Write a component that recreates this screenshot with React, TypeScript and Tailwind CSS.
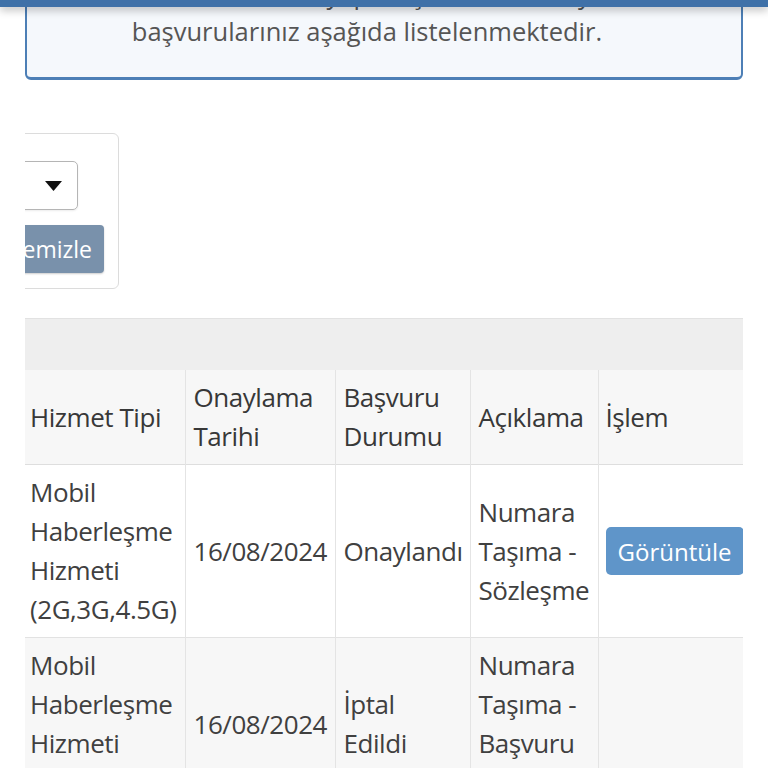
import React from 'react';

type Row = {
  hizmet: string[];
  tarih: string;
  durum: string[];
  aciklama: string[];
  islem: boolean;
};

const rows: Row[] = [
  {
    hizmet: ['Mobil', 'Haberleşme', 'Hizmeti', '(2G,3G,4.5G)'],
    tarih: '16/08/2024',
    durum: ['Onaylandı'],
    aciklama: ['Numara', 'Taşıma -', 'Sözleşme'],
    islem: true,
  },
  {
    hizmet: ['Mobil', 'Haberleşme', 'Hizmeti', '(2G,3G,4.5G)'],
    tarih: '16/08/2024',
    durum: ['İptal', 'Edildi'],
    aciklama: ['Numara', 'Taşıma -', 'Başvuru', 'İptali'],
    islem: false,
  },
];

function Lines({ items }: { items: string[] }) {
  return (
    <>
      {items.map((t, i) => (
        <div key={i}>{t}</div>
      ))}
    </>
  );
}

export default function App() {
  return (
    <div
      className="relative w-[768px] h-[768px] overflow-hidden bg-white text-[#444]"
      style={{ fontFamily: '"Open Sans", "Noto Sans", sans-serif' }}
    >
      {/* top bar */}
      <div className="absolute top-0 left-0 right-0 z-10 h-[7px] bg-[#3f71a8] shadow-[0_3px_8px_rgba(0,0,0,0.28)]" />

      <div className="px-[25px]">
        <div className="-mt-[41px] rounded-md border-2 border-b-[3px] border-[#4d7fb6] bg-[#f5f8fc] pt-[15px] pb-[27px] pr-[34px] text-center text-[25.5px] leading-[37px] text-[#555]">
          <div>Kimlik numaranız ile yapılmış olan son bir yıla ait</div>
          <div>başvurularınız aşağıda listelenmektedir.</div>
        </div>

        {/* filter card, scrolled horizontally */}
        <div className="mt-[53px] overflow-hidden">
          <div className="-ml-[200px] w-[294px] rounded-md border border-[#dcdcdc] pt-[27px] pb-[15px] flex flex-col items-end gap-[15px]">
            <div className="mr-[40px] w-[230px] h-[49px] rounded-[5px] border border-[#b5b5b5] shadow-[0_1px_2px_rgba(0,0,0,0.08)] flex items-center justify-end pr-[15px]">
              <svg width="17" height="10" viewBox="0 0 17 10">
                <path d="M0 0 H17 L8.5 10 Z" fill="#111" />
              </svg>
            </div>
            <button className="mr-[14px] h-[48px] w-[160px] rounded-[4px] bg-[#7991ab] pr-[12px] text-right text-[23px] text-white shadow-[0_1px_2px_rgba(0,0,0,0.2)]">
              Temizle
            </button>
          </div>
        </div>

        {/* results */}
        <div className="mt-[29px] overflow-hidden">
          <div className="h-[52px] border-t border-[#e2e2e2] bg-[#eeeeee] shadow-[0_1px_2px_rgba(0,0,0,0.12)]" />
          <table className="-ml-[3px] w-[729px] table-fixed border-collapse text-[26px] leading-[39px] tracking-[-0.45px] text-[#404040]">
            <colgroup>
              <col className="w-[163px]" />
              <col className="w-[150px]" />
              <col className="w-[135px]" />
              <col className="w-[128px]" />
              <col className="w-[153px]" />
            </colgroup>
            <thead>
              <tr className="bg-[#f7f7f7] border-b border-[#dedede] text-[#383838]">
                <th className="px-[8px] py-[8px] text-left font-normal align-middle border-r border-[#e4e4e4] whitespace-nowrap">Hizmet Tipi</th>
                <th className="px-[8px] py-[8px] text-left font-normal align-middle border-r border-[#e4e4e4]">
                  <Lines items={['Onaylama', 'Tarihi']} />
                </th>
                <th className="px-[8px] py-[8px] text-left font-normal align-middle border-r border-[#e4e4e4]">
                  <Lines items={['Başvuru', 'Durumu']} />
                </th>
                <th className="px-[8px] py-[8px] text-left font-normal align-middle border-r border-[#e4e4e4]">Açıklama</th>
                <th className="px-[7px] py-[8px] text-left font-normal align-middle">İşlem</th>
              </tr>
            </thead>
            <tbody>
              {rows.map((r, i) => (
                <tr key={i} className={`border-b border-[#e2e2e2] ${i % 2 === 1 ? 'bg-[#f7f7f7]' : 'bg-white'}`}>
                  <td className="px-[8px] py-[8px] align-middle border-r border-[#e4e4e4] whitespace-nowrap">
                    <Lines items={r.hizmet} />
                  </td>
                  <td className="px-[8px] py-[8px] align-middle border-r border-[#e4e4e4] whitespace-nowrap">{r.tarih}</td>
                  <td className="px-[8px] py-[8px] align-middle border-r border-[#e4e4e4] whitespace-nowrap">
                    <Lines items={r.durum} />
                  </td>
                  <td className="px-[8px] py-[8px] align-middle border-r border-[#e4e4e4] whitespace-nowrap">
                    <Lines items={r.aciklama} />
                  </td>
                  <td className="px-[7px] py-[8px] align-middle">
                    {r.islem && (
                      <button className="h-[48px] w-[138px] rounded-[5px] bg-[#5f95c9] text-[24px] tracking-normal text-white">
                        Görüntüle
                      </button>
                    )}
                  </td>
                </tr>
              ))}
            </tbody>
          </table>
        </div>
      </div>
    </div>
  );
}
